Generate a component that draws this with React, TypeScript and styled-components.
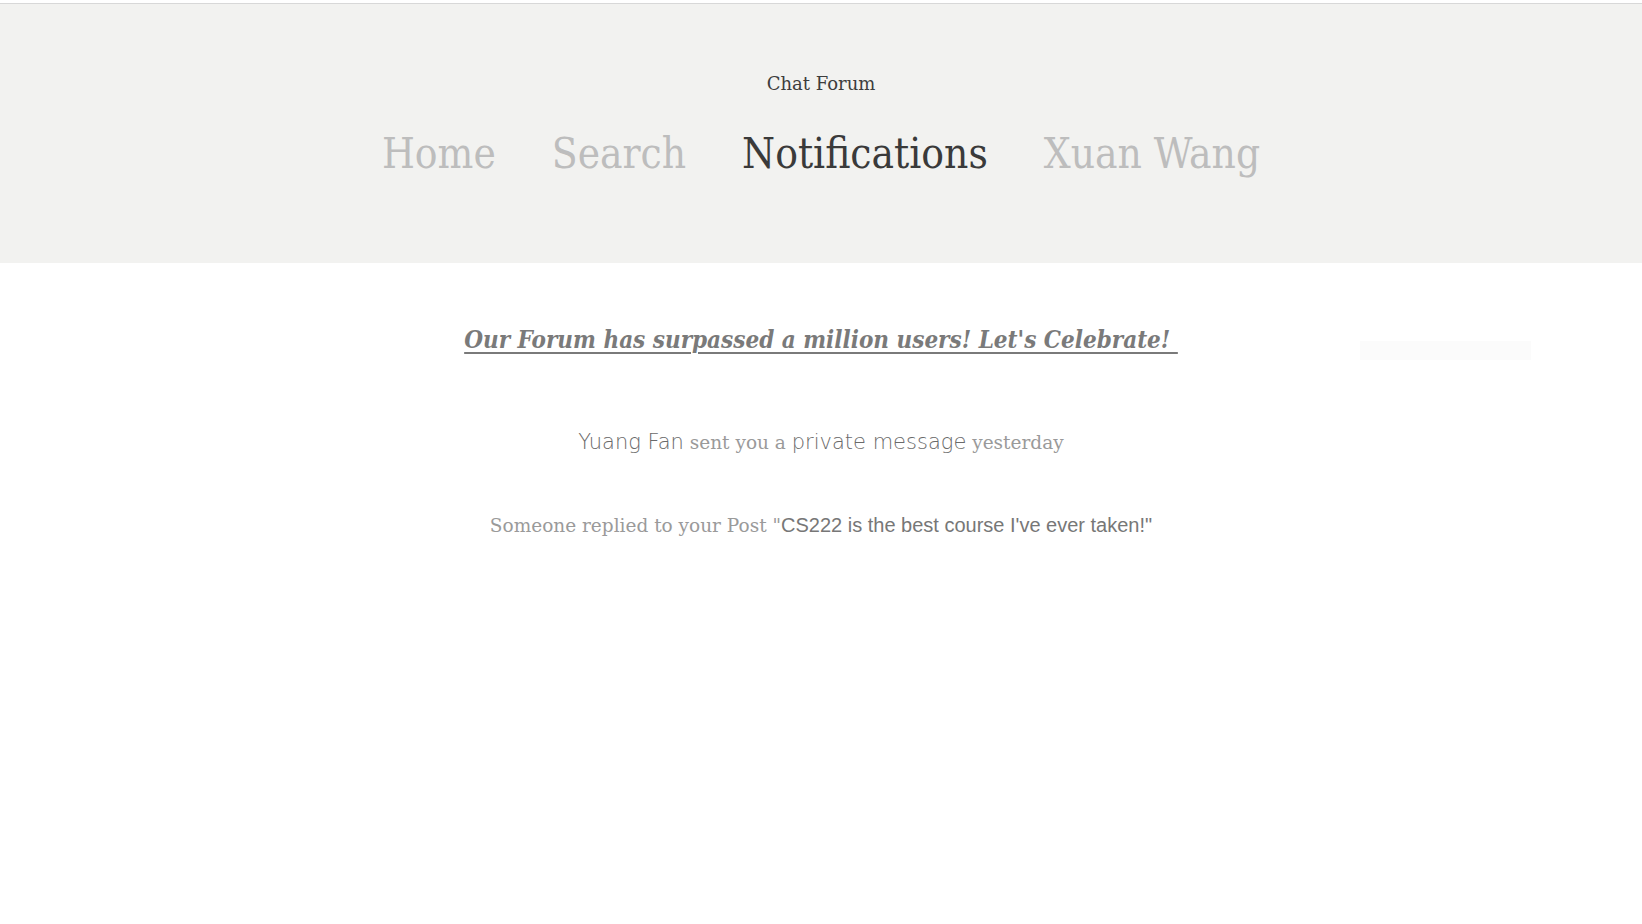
import React from "react";
import styled, { createGlobalStyle } from "styled-components";

const GlobalStyle = createGlobalStyle`
  html, body {
    margin: 0;
    padding: 0;
    background: #ffffff;
  }
  body {
    font-family: "DejaVu Serif", serif;
  }
`;

const Page = styled.div`
  padding-top: 3px;
  min-height: 921px;
  background: #ffffff;
`;

const Header = styled.header`
  border-top: 1px solid #d8d8d8;
  background: #f2f2f0;
  padding: 68px 0 84px;
  text-align: center;
`;

const SiteTitle = styled.div`
  font-family: "DejaVu Serif", serif;
  font-size: 18px;
  line-height: 24px;
  color: #3d3d3d;
`;

const Nav = styled.nav`
  display: flex;
  justify-content: center;
  gap: 56px;
  margin-top: 33px;
`;

const NavLink = styled.a<{ $active?: boolean }>`
  font-family: "DejaVu Serif", serif;
  font-stretch: condensed;
  font-size: 42px;
  line-height: 50px;
  font-weight: 300;
  color: ${(p) => (p.$active ? "#3a3a3a" : "#bdbdbd")};
  text-decoration: none;
  cursor: pointer;
`;

const Main = styled.main`
  padding-top: 62px;
`;

const BannerRow = styled.div`
  display: grid;
  grid-template-columns: 1fr auto 1fr;
  align-items: start;
`;

const Banner = styled.a`
  grid-column: 2;
  font-family: "DejaVu Serif", serif;
  font-stretch: condensed;
  font-style: italic;
  font-weight: bold;
  font-size: 24px;
  line-height: 30px;
  color: #7a7a7a;
  text-decoration: underline;
  text-decoration-thickness: 2px;
  text-underline-offset: 4px;
  white-space: pre;
`;

const GhostBox = styled.div`
  grid-column: 3;
  justify-self: end;
  width: 171px;
  height: 19px;
  margin-right: 111px;
  margin-top: 16px;
  background: #fbfbfb;
`;

const NotificationList = styled.ul`
  list-style: none;
  margin: 0;
  padding: 0;
  display: flex;
  flex-direction: column;
  align-items: center;
  gap: 50px;
  margin-top: 66px;
`;

const Notification = styled.li`
  font-family: "DejaVu Serif", serif;
  font-size: 18.5px;
  line-height: 32px;
  color: #9a9a9a;
  font-weight: 300;
`;

const Strong = styled.span<{ $arial?: boolean }>`
  font-family: ${(p) =>
    p.$arial ? `"Liberation Sans", Arial, sans-serif` : `"DejaVu Sans", sans-serif`};
  font-size: ${(p) => (p.$arial ? "20px" : "21px")};
  color: ${(p) => (p.$arial ? "#777777" : "#6a6a6a")};
`;

export default function App() {
  return (
    <>
      <GlobalStyle />
      <Page>
        <Header>
          <SiteTitle>Chat Forum</SiteTitle>
          <Nav>
            <NavLink>Home</NavLink>
            <NavLink>Search</NavLink>
            <NavLink $active>Notifications</NavLink>
            <NavLink>Xuan Wang</NavLink>
          </Nav>
        </Header>
        <Main>
          <BannerRow>
            <Banner>Our Forum has surpassed a million users! Let's Celebrate! </Banner>
            <GhostBox />
          </BannerRow>
          <NotificationList>
            <Notification>
              <Strong>Yuang Fan</Strong> sent you a <Strong>private message</Strong> yesterday
            </Notification>
            <Notification>
              Someone replied to your Post "<Strong $arial>CS222 is the best course I've ever taken!"</Strong>
            </Notification>
          </NotificationList>
        </Main>
      </Page>
    </>
  );
}
